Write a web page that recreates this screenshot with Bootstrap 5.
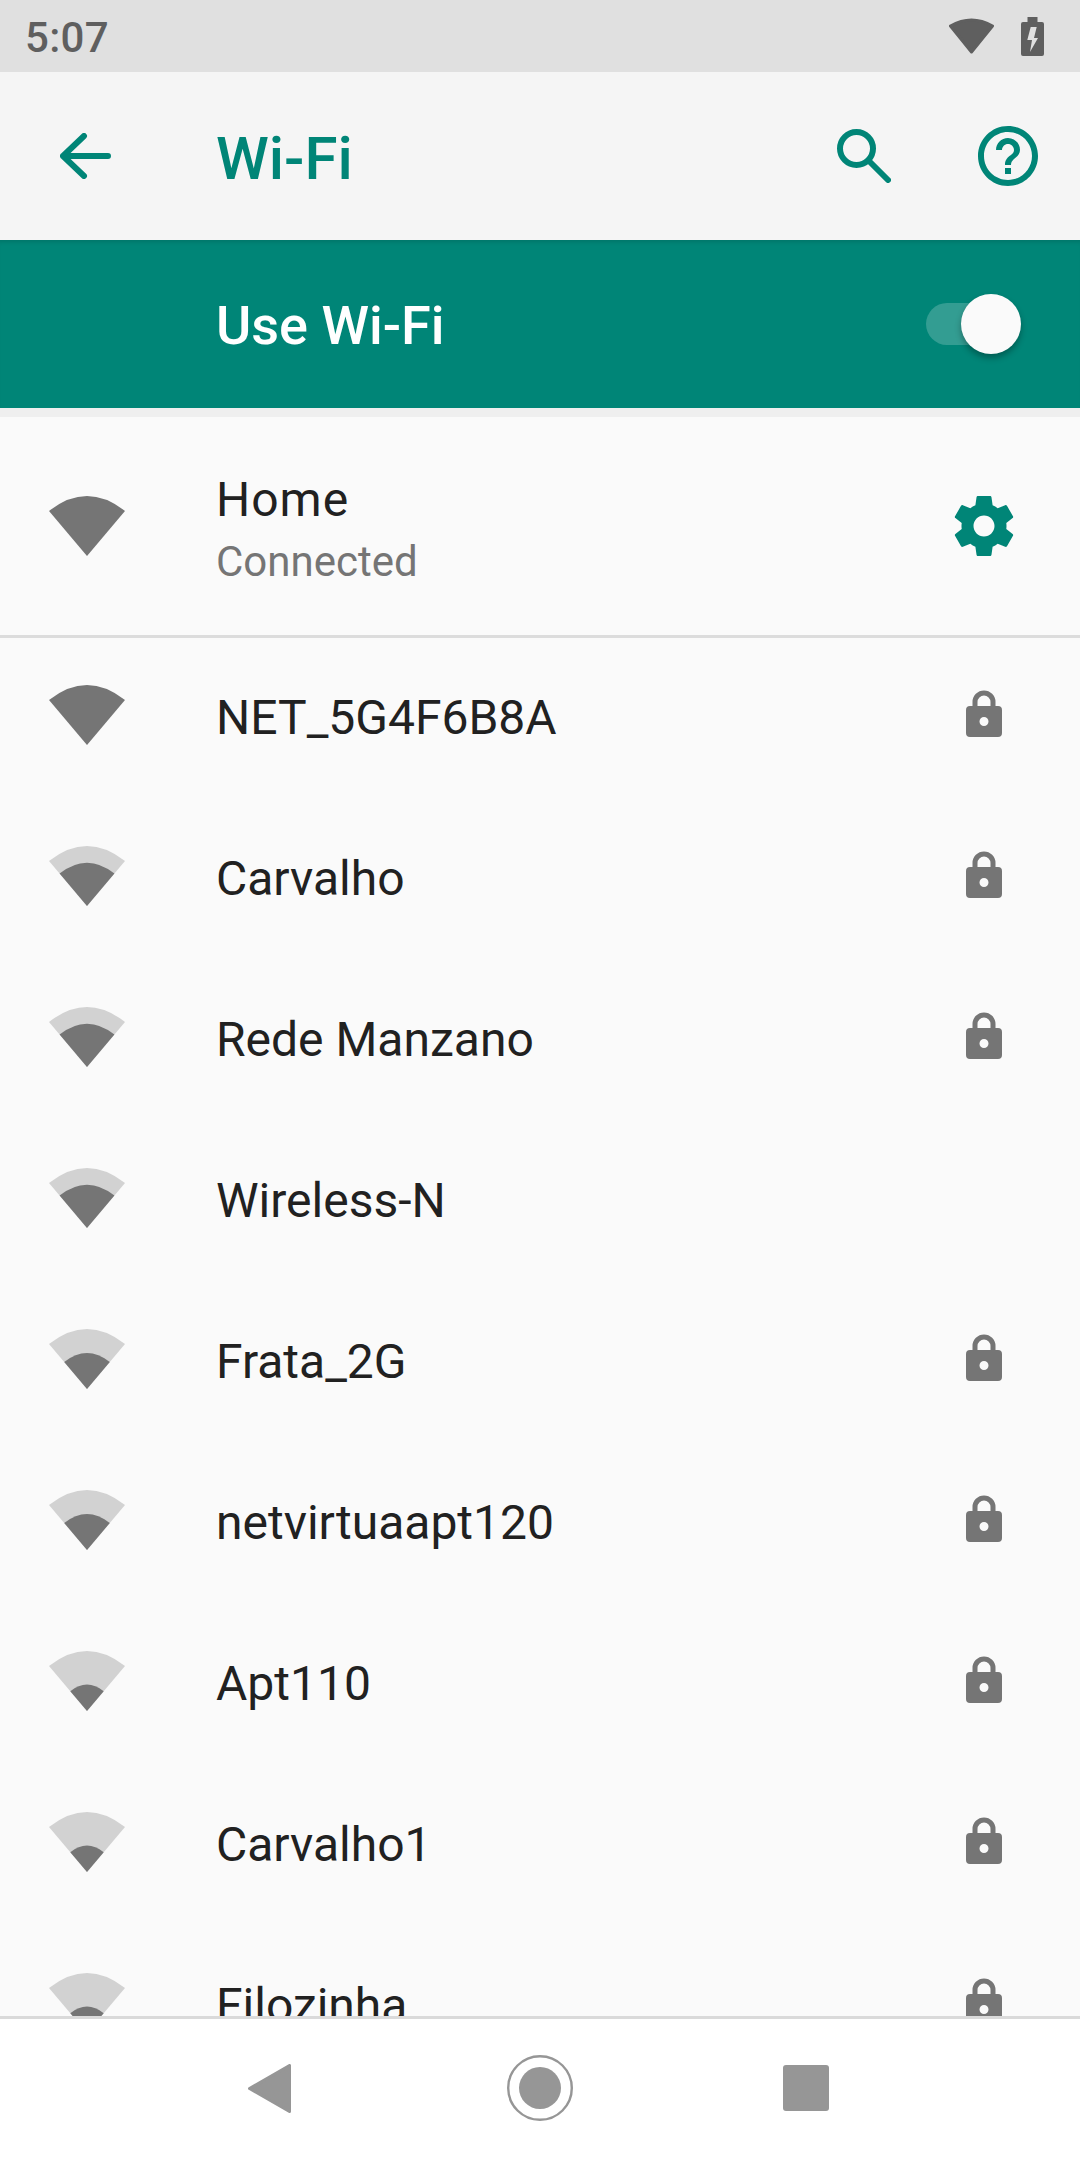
<!DOCTYPE html>
<html lang="en">
<head>
<meta charset="utf-8">
<title>Wi-Fi</title>
<link rel="stylesheet" href="https://cdn.jsdelivr.net/npm/bootstrap@5.3.0/dist/css/bootstrap.min.css">
<script src="https://cdn.jsdelivr.net/npm/bootstrap@5.3.0/dist/js/bootstrap.bundle.min.js"></script>
<style>
html, body { margin: 0; background: #fafafa; }
body { font-family: Roboto, "Liberation Sans", sans-serif; color: #212121; }
.phone-screen { width: 1080px; height: 2160px; overflow: hidden; }
.status-strip { height: 72px; background: #e0e0e0; color: #5f5f5f; padding: 0 36px 0 25px; font-size: 42px; line-height: 1; }
.status-strip .time-text { font-weight: 500; letter-spacing: .3px; padding-top: 4px; }
.app-strip { height: 168px; background: #f5f5f5; color: #008577; padding: 0 36px 0 60px; }
.app-title { font-size: 60px; font-weight: 500; line-height: 1; margin: 5px 0 0 105px; }
.use-strip { height: 168px; background: #008577; color: #fff; padding-left: 216px; padding-right: 59px; box-shadow: inset 0 5px 4px -3px rgba(0,0,0,.12); }
.use-label { font-size: 54px; font-weight: 500; line-height: 1; padding-top: 4px; }
.toggle-wrap { position: relative; width: 95px; height: 60px; }
.toggle-track { position: absolute; left: 0; top: 9px; width: 78px; height: 42px; border-radius: 21px; background: rgba(255,255,255,.2); }
.toggle-thumb { position: absolute; right: 0; top: 0; width: 60px; height: 60px; border-radius: 50%; background: #fafafa; box-shadow: 0 4px 6px rgba(0,0,0,.3); }
.gap-strip { height: 9px; flex: none; background: #efefef; }
.wifi-list { flex: 1 1 0; min-height: 0; overflow: hidden; background: #fafafa; }
.wifi-row { background: #fafafa; border: 0; border-radius: 0; padding: 0 78px 0 49px; flex-shrink: 0; }
.wifi-row.current { height: 221px; border-bottom: 3px solid #dcdcdc; }
.wifi-row.plain { height: 161px; }
.net-glyph { width: 76px; height: 60px; flex: none; margin-right: 91px; display: block; }
.plain .net-glyph { margin-bottom: 8px; }
.net-name { font-size: 48px; line-height: 1.2; color: #212121; }
.plain .net-name { margin-bottom: 2px; }
.net-name.lead-name { letter-spacing: 1px; margin-bottom: 8px; }
.net-text { padding-top: 6px; }
.net-sub { font-size: 42px; line-height: 1.2; color: #757575; }
.lock-glyph { width: 36px; height: 47px; flex: none; margin-bottom: 10px; }
.gear-glyph { width: 72px; height: 72px; flex: none; margin-right: -17.5px; fill: #008577; }
.nav-strip { height: 144px; flex: none; background: #fff; border-top: 3px solid #dadada; padding-bottom: 3px; }
.nav-glyph { fill: #969696; display: block; }
.top-glyph { fill: #008577; display: block; flex: none; }
</style>
</head>
<body>
<svg width="0" height="0" class="d-block position-absolute">
  <defs>
    <symbol id="lock" viewBox="0 0 36 47">
      <path d="M9 17V12a9 9 0 0 1 18 0V17" fill="none" stroke="#757575" stroke-width="5"/>
      <path fill-rule="evenodd" fill="#757575" d="M4 16H32a4 4 0 0 1 4 4V43a4 4 0 0 1-4 4H4a4 4 0 0 1-4-4V20a4 4 0 0 1 4-4ZM18 27a4.5 4.5 0 1 0 0 9a4.5 4.5 0 1 0 0-9Z"/>
    </symbol>
    <symbol id="wifi-4" viewBox="0 0 76 60"><path fill="#757575" d="M38 60L0 15Q38 -15 76 15Z"/></symbol>
    <symbol id="wifi-3" viewBox="0 0 76 60"><path fill="#d2d2d2" d="M38 60L0 15Q38 -15 76 15Z"/><path fill="#757575" d="M38 60L10.6 27.6Q38 6 65.4 27.6Z"/></symbol>
    <symbol id="wifi-2" viewBox="0 0 76 60"><path fill="#d2d2d2" d="M38 60L0 15Q38 -15 76 15Z"/><path fill="#757575" d="M38 60L15.2 33Q38 15 60.8 33Z"/></symbol>
    <symbol id="wifi-1" viewBox="0 0 76 60"><path fill="#d2d2d2" d="M38 60L0 15Q38 -15 76 15Z"/><path fill="#757575" d="M38 60L21.3 40.2Q38 27 54.7 40.2Z"/></symbol>
  </defs>
</svg>

<div class="phone-screen d-flex flex-column">
  <div class="status-strip d-flex align-items-center flex-none">
    <span class="time-text">5:07</span>
    <svg class="ms-auto" width="45" height="36" viewBox="0 0 45 36" style="margin-right:27px"><path fill="#5f5f5f" stroke="#5f5f5f" stroke-width="3" stroke-linejoin="round" d="M22.5 34L1.5 8Q22.5 -4 43.5 8Z"/></svg>
    <svg width="23" height="39" viewBox="0 0 23 39"><path fill="#5f5f5f" d="M6.500 0H16.500V5H21a2 2 0 0 1 2 2V37a2 2 0 0 1-2 2H2a2 2 0 0 1-2-2V7a2 2 0 0 1 2-2H6.500Z"/><path fill="#e0e0e0" d="M9.700 10H15.700L13 21H17L9 35L11 23H6.300Z"/></svg>
  </div>

  <header class="app-strip d-flex align-items-center flex-none">
    <svg class="top-glyph" width="51" height="46" viewBox="0 0 51 46" fill="none"><path d="M3 23H48M24 3L3 23L24 43" stroke="#008577" stroke-width="6" stroke-linecap="round" stroke-linejoin="round" fill="none"/></svg>
    <h1 class="app-title">Wi-Fi</h1>
    <svg class="ms-auto" width="54" height="54" viewBox="0 0 54 54" style="margin-right:81px"><circle cx="19.500" cy="19.500" r="16.500" fill="none" stroke="#008577" stroke-width="6"/><path d="M33 33L51 51" stroke="#008577" stroke-width="6" stroke-linecap="round"/></svg>
    <svg class="top-glyph" width="72" height="72" viewBox="0 0 24 24"><path d="M11 18h2v-2h-2v2zm1-16C6.480 2 2 6.480 2 12s4.480 10 10 10 10-4.480 10-10S17.520 2 12 2zm0 18c-4.410 0-8-3.590-8-8s3.590-8 8-8 8 3.590 8 8-3.590 8-8 8zm0-14c-2.210 0-4 1.790-4 4h2c0-1.100.9-2 2-2s2 .9 2 2c0 2-3 1.750-3 5h2c0-2.250 3-2.500 3-5 0-2.210-1.790-4-4-4z"/></svg>
  </header>

  <div class="use-strip d-flex align-items-center justify-content-between flex-none">
    <span class="use-label">Use Wi-Fi</span>
    <span class="toggle-wrap"><span class="toggle-track"></span><span class="toggle-thumb"></span></span>
  </div>
  <div class="gap-strip"></div>

  <div class="wifi-list list-group list-group-flush">
    <div class="list-group-item wifi-row current d-flex align-items-center">
      <svg class="net-glyph"><use href="#wifi-4"/></svg>
      <div class="flex-grow-1 net-text">
        <div class="net-name lead-name">Home</div>
        <div class="net-sub">Connected</div>
      </div>
      <svg class="gear-glyph" viewBox="0 0 24 24"><path d="M19.430 12.980c.04-.32.07-.64.07-.98s-.03-.66-.07-.98l2.110-1.650c.19-.15.24-.42.12-.64l-2-3.460c-.12-.22-.39-.3-.61-.22l-2.490 1c-.52-.4-1.080-.73-1.690-.98l-.38-2.650C14.460 2.180 14.250 2 14 2h-4c-.25 0-.46.18-.49.42l-.38 2.650c-.61.25-1.170.59-1.690.98l-2.490-1c-.23-.09-.49 0-.61.22l-2 3.460c-.13.22-.07.49.12.64l2.110 1.650c-.04.32-.07.65-.07.98s.03.66.07.98l-2.110 1.650c-.19.15-.24.42-.12.64l2 3.460c.12.22.39.3.61.22l2.490-1c.52.4 1.080.73 1.690.98l.38 2.650c.03.24.24.42.49.42h4c.25 0 .46-.18.49-.42l.38-2.650c.61-.25 1.170-.59 1.690-.98l2.490 1c.23.09.49 0 .61-.22l2-3.460c.12-.22.07-.49-.12-.64l-2.110-1.650zM12 15.500c-1.930 0-3.500-1.570-3.500-3.500s1.570-3.500 3.500-3.500 3.500 1.570 3.500 3.500-1.570 3.500-3.500 3.500z"/></svg>
    </div>
    <div class="list-group-item wifi-row plain d-flex align-items-center"><svg class="net-glyph"><use href="#wifi-4"/></svg><div class="net-name flex-grow-1">NET_5G4F6B8A</div><svg class="lock-glyph"><use href="#lock"/></svg></div>
    <div class="list-group-item wifi-row plain d-flex align-items-center"><svg class="net-glyph"><use href="#wifi-3"/></svg><div class="net-name flex-grow-1">Carvalho</div><svg class="lock-glyph"><use href="#lock"/></svg></div>
    <div class="list-group-item wifi-row plain d-flex align-items-center"><svg class="net-glyph"><use href="#wifi-3"/></svg><div class="net-name flex-grow-1">Rede Manzano</div><svg class="lock-glyph"><use href="#lock"/></svg></div>
    <div class="list-group-item wifi-row plain d-flex align-items-center"><svg class="net-glyph"><use href="#wifi-3"/></svg><div class="net-name flex-grow-1">Wireless-N</div></div>
    <div class="list-group-item wifi-row plain d-flex align-items-center"><svg class="net-glyph"><use href="#wifi-2"/></svg><div class="net-name flex-grow-1">Frata_2G</div><svg class="lock-glyph"><use href="#lock"/></svg></div>
    <div class="list-group-item wifi-row plain d-flex align-items-center"><svg class="net-glyph"><use href="#wifi-2"/></svg><div class="net-name flex-grow-1">netvirtuaapt120</div><svg class="lock-glyph"><use href="#lock"/></svg></div>
    <div class="list-group-item wifi-row plain d-flex align-items-center"><svg class="net-glyph"><use href="#wifi-1"/></svg><div class="net-name flex-grow-1">Apt110</div><svg class="lock-glyph"><use href="#lock"/></svg></div>
    <div class="list-group-item wifi-row plain d-flex align-items-center"><svg class="net-glyph"><use href="#wifi-1"/></svg><div class="net-name flex-grow-1">Carvalho1</div><svg class="lock-glyph"><use href="#lock"/></svg></div>
    <div class="list-group-item wifi-row plain d-flex align-items-center"><svg class="net-glyph"><use href="#wifi-1"/></svg><div class="net-name flex-grow-1">Filozinha</div><svg class="lock-glyph"><use href="#lock"/></svg></div>
  </div>

  <nav class="nav-strip d-flex justify-content-center">
    <div class="d-flex align-items-center" style="margin-right:3px">
      <svg class="nav-glyph" width="43" height="49" viewBox="0 0 43 49"><path stroke="#969696" stroke-width="3" stroke-linejoin="round" d="M41.500 1.500V47.500L1.500 24.500Z"/></svg>
      <svg width="66" height="66" viewBox="0 0 66 66" class="d-block" style="margin:0 0 0 216px"><circle cx="33" cy="33" r="31.800" fill="none" stroke="#969696" stroke-width="2.400"/><circle cx="33" cy="33" r="21" fill="#969696"/></svg>
      <svg class="nav-glyph" width="46" height="46" viewBox="0 0 46 46" style="margin-left:210px"><rect width="46" height="46" rx="3"/></svg>
    </div>
  </nav>
</div>
</body>
</html>
